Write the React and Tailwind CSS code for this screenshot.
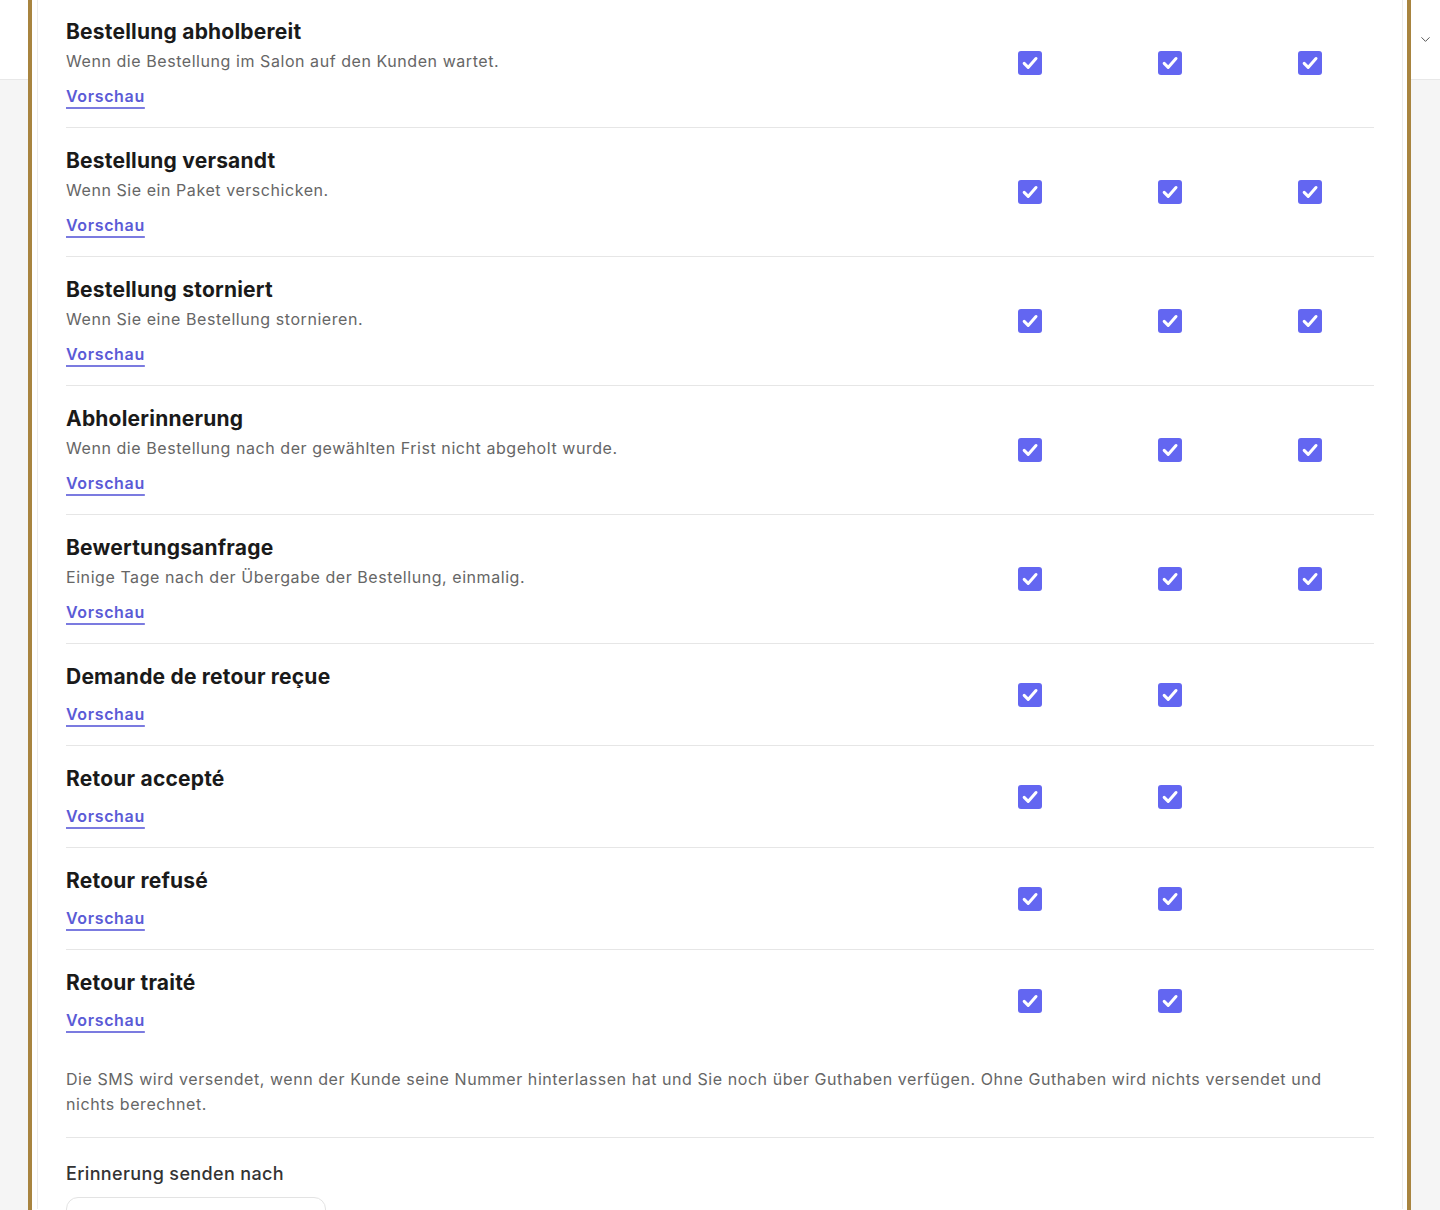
import { ChevronDown } from 'lucide-react';

const notifications = [
    { title: 'Bestellung abholbereit', text: 'Wenn die Bestellung im Salon auf den Kunden wartet.', channels: 3 },
    { title: 'Bestellung versandt', text: 'Wenn Sie ein Paket verschicken.', channels: 3 },
    { title: 'Bestellung storniert', text: 'Wenn Sie eine Bestellung stornieren.', channels: 3 },
    { title: 'Abholerinnerung', text: 'Wenn die Bestellung nach der gewählten Frist nicht abgeholt wurde.', channels: 3 },
    { title: 'Bewertungsanfrage', text: 'Einige Tage nach der Übergabe der Bestellung, einmalig.', channels: 3 },
    { title: 'Demande de retour reçue', channels: 2 },
    { title: 'Retour accepté', channels: 2 },
    { title: 'Retour refusé', channels: 2 },
    { title: 'Retour traité', channels: 2 },
];

const Checkbox = () => (
    <div className="w-6 h-6 rounded-[3px] bg-[#6366f1] flex items-center justify-center">
        <svg width="20" height="20" viewBox="0 0 24 24" fill="none">
            <path d="M5 12.5l4.8 4.8L19.2 6.6" stroke="white" strokeWidth="3.6" strokeLinecap="round" strokeLinejoin="round" />
        </svg>
    </div>
);

const Row = ({ item, last }) => (
    <div className={`flex items-center py-[19px] ${last ? '' : 'border-b border-[#e6e6e6]'}`}>
        <div className="flex-1">
            <h3 className="text-[21px] leading-7 font-bold text-[#1a1a1a] tracking-[0.01em]">{item.title}</h3>
            {item.text && <p className="mt-[3px] text-base leading-6 text-[#666] tracking-[0.035em]">{item.text}</p>}
            <a href="#" className="block w-fit mt-[11px] text-base leading-6 font-semibold text-[#5b5bd6] tracking-[0.04em] underline decoration-2 underline-offset-[5px] decoration-[#7b7be0]">
                Vorschau
            </a>
        </div>
        <div className="flex shrink-0 gap-[116px] pr-[52px]">
            {Array.from({ length: 3 }).map((_, i) => (
                <div key={i} className="w-6 h-6">{i < item.channels && <Checkbox />}</div>
            ))}
        </div>
    </div>
);

const SideColumn = ({ children }) => (
    <div className="flex flex-col h-full">
        <div className="h-[80px] bg-white border-b border-[#e8e8e8] flex items-center justify-center">{children}</div>
        <div className="flex-1 bg-[#f5f5f5]"></div>
    </div>
);

export default function App() {
    return (
        <div className="flex h-[1210px] overflow-hidden bg-white font-['Inter',sans-serif]">
            <div className="w-[28px]">
                <SideColumn />
            </div>

            <div className="flex-1 border-x-4 border-[#a8843f] pl-[5px] pr-[4px] bg-white">
                <div className="h-full border-x border-[#ececec] px-[28px]">
                    <div className="-mt-[1px]">
                        {notifications.map((item, i) => (
                            <Row key={item.title} item={item} last={i === notifications.length - 1} />
                        ))}
                    </div>

                    <p className="mt-4 pb-5 text-base leading-[25px] text-[#666] tracking-[0.035em] border-b border-[#e6e6e6]">
                        Die SMS wird versendet, wenn der Kunde seine Nummer hinterlassen hat und Sie noch über Guthaben verfügen. Ohne Guthaben wird nichts versendet und nichts berechnet.
                    </p>

                    <div className="pt-[22px]">
                        <label className="block text-[18px] leading-7 font-medium text-[#333] tracking-[0.02em]">Erinnerung senden nach</label>
                        <div className="mt-[9px] w-[260px] h-[44px] rounded-xl border border-[#e3e3e3] bg-white"></div>
                    </div>
                </div>
            </div>

            <div className="w-[29px]">
                <SideColumn>
                    <ChevronDown size={15} strokeWidth={1.6} className="text-[#555]" />
                </SideColumn>
            </div>
        </div>
    );
}
